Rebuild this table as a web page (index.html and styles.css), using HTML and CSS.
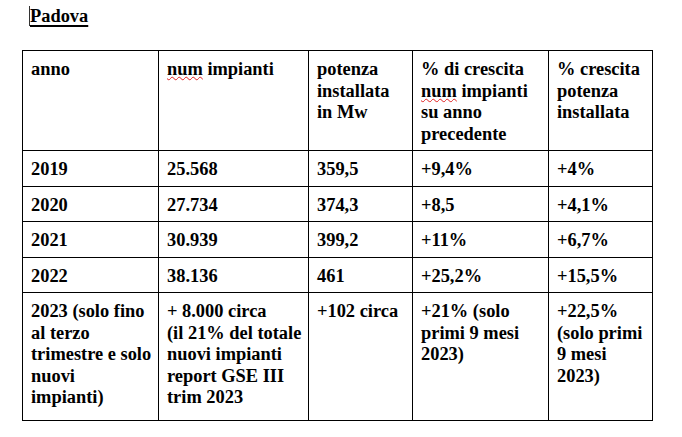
FILE: index.html
```html
<!DOCTYPE html>
<html lang="it">
<head>
<meta charset="utf-8">
<title>Padova</title>
<link rel="stylesheet" href="styles.css">
</head>
<body>
<div class="doc">
  <p class="title"><span class="caret"></span><span class="title-text">Padova</span></p>
  <table class="data">
    <colgroup>
      <col class="c1"><col class="c2"><col class="c3"><col class="c4"><col class="c5">
    </colgroup>
    <tr class="head">
      <td>anno</td>
      <td><span class="spell">num</span> impianti</td>
      <td>potenza<br>installata<br>in Mw</td>
      <td>% di crescita<br><span class="spell">num</span> impianti<br>su anno<br>precedente</td>
      <td>% crescita<br>potenza<br>installata</td>
    </tr>
    <tr><td>2019</td><td>25.568</td><td>359,5</td><td>+9,4%</td><td>+4%</td></tr>
    <tr><td>2020</td><td>27.734</td><td>374,3</td><td>+8,5</td><td>+4,1%</td></tr>
    <tr><td>2021</td><td>30.939</td><td>399,2</td><td>+11%</td><td>+6,7%</td></tr>
    <tr><td>2022</td><td>38.136</td><td>461</td><td>+25,2%</td><td>+15,5%</td></tr>
    <tr class="last">
      <td>2023 (solo fino<br>al terzo<br>trimestre e solo<br>nuovi<br>impianti)</td>
      <td>+ 8.000 circa<br>(il 21% del totale<br>nuovi impianti<br>report GSE III<br>trim 2023</td>
      <td>+102 circa</td>
      <td>+21% (solo<br>primi 9 mesi<br>2023)</td>
      <td>+22,5%<br>(solo primi<br>9 mesi<br>2023)</td>
    </tr>
  </table>
</div>
</body>
</html>
```

FILE: styles.css
```css
html, body {
  margin: 0;
  padding: 0;
  background: #ffffff;
}

.doc {
  font-family: "Liberation Serif", "Times New Roman", serif;
  font-weight: bold;
  font-size: 18.4px;
  line-height: 21.5px;
  color: #000000;
  padding-top: 6px;
}

.title {
  margin: 0 0 22.5px 0;
  padding-left: 29px;
  height: 21.5px;
  display: flex;
  align-items: flex-start;
}

.caret {
  display: inline-block;
  width: 1px;
  height: 20px;
  background: #333333;
}

.title-text {
  text-decoration: underline;
  text-decoration-thickness: 2px;
  text-underline-offset: 3px;
}

.data {
  margin-left: 22px;
  border-collapse: collapse;
  table-layout: fixed;
  width: 630px;
}

.c1 { width: 136px; }
.c2 { width: 150px; }
.c3 { width: 104px; }
.c4 { width: 136px; }
.c5 { width: 104px; }

.data td {
  border: 1px solid #000000;
  vertical-align: top;
  padding: 8px 2px 5px 8px;
  white-space: nowrap;
}

.head td {
  height: 86px;
}

.last td {
  padding-bottom: 11px;
}

.spell {
  text-decoration: underline wavy #e02020;
  text-decoration-thickness: 1px;
  text-underline-offset: 1px;
}
```
